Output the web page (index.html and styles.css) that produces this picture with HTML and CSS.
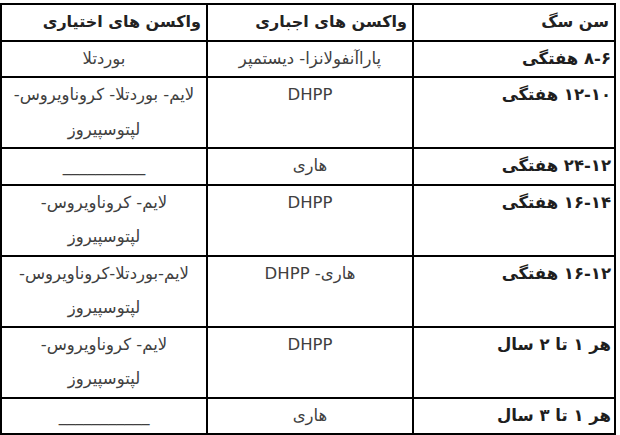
FILE: index.html
```html
<!DOCTYPE html>
<html lang="fa" dir="rtl">
<head>
<meta charset="utf-8">
<link rel="stylesheet" href="styles.css">
</head>
<body>
<div class="wrap">
<table class="vax">
  <colgroup>
    <col class="c-age">
    <col class="c-req">
    <col class="c-opt">
  </colgroup>
  <thead>
    <tr>
      <th>سن سگ</th>
      <th>واکسن های اجباری</th>
      <th>واکسن های اختیاری</th>
    </tr>
  </thead>
  <tbody>
    <tr>
      <td class="age">۸-۶ هفتگی</td>
      <td>پاراآنفولانزا- دیستمپر</td>
      <td>بوردتلا</td>
    </tr>
    <tr>
      <td class="age">۱۲-۱۰ هفتگی</td>
      <td>DHPP</td>
      <td>لایم- بوردتلا- کروناویروس- لپتوسپیروز</td>
    </tr>
    <tr>
      <td class="age">۲۴-۱۲ هفتگی</td>
      <td>هاری</td>
      <td>__________</td>
    </tr>
    <tr>
      <td class="age">۱۶-۱۴ هفتگی</td>
      <td>DHPP</td>
      <td>لایم- کروناویروس- لپتوسپیروز</td>
    </tr>
    <tr>
      <td class="age">۱۶-۱۲ هفتگی</td>
      <td>هاری- DHPP</td>
      <td>لایم-بوردتلا-کروناویروس- لپتوسپیروز</td>
    </tr>
    <tr>
      <td class="age">هر ۱ تا ۲ سال</td>
      <td>DHPP</td>
      <td>لایم- کروناویروس- لپتوسپیروز</td>
    </tr>
    <tr>
      <td class="age">هر ۱ تا ۳ سال</td>
      <td>هاری</td>
      <td>___________</td>
    </tr>
  </tbody>
</table>
</div>
</body>
</html>
```

FILE: styles.css
```css
html, body {
  margin: 0;
  padding: 0;
  background: #ffffff;
}

.wrap {
  padding: 3px 4px 0 2px;
}

.vax {
  border-collapse: collapse;
  width: 614px;
  table-layout: fixed;
  font-family: "DejaVu Sans", "Noto Sans", sans-serif;
  font-size: 16.5px;
  color: #404040;
}

.c-age { width: 202px; }
.c-req { width: 206px; }
.c-opt { width: 206px; }

.vax th,
.vax td {
  border: 2px solid #000000;
  padding: 0 5px;
  line-height: 34.5px;
  vertical-align: top;
}

.vax th {
  text-align: right;
  font-weight: bold;
  font-size: 16px;
  color: #222222;
}

.vax td {
  text-align: center;
}

.vax td.age {
  text-align: right;
  font-weight: bold;
  font-size: 16.5px;
  color: #1e1e1e;
  padding-right: 3px;
}
```
